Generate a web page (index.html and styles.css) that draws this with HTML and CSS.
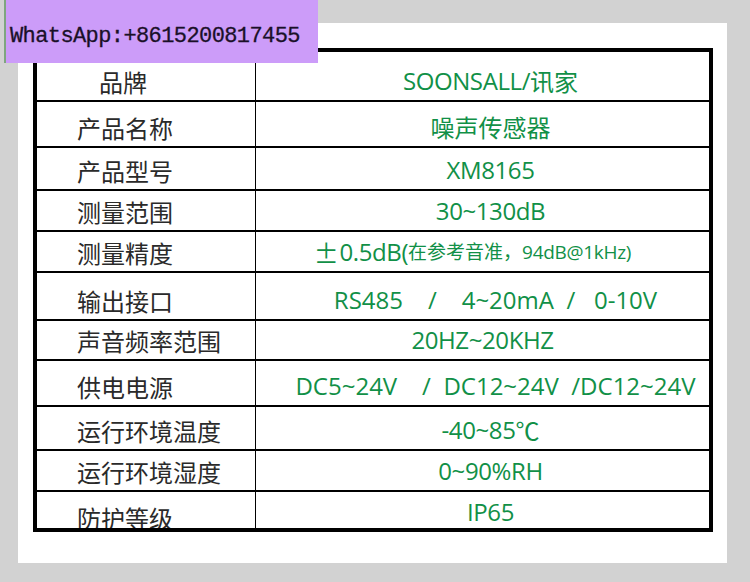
FILE: index.html
```html
<!DOCTYPE html>
<html lang="zh">
<head>
<meta charset="utf-8">
<title>噪声传感器 参数</title>
<link rel="stylesheet" href="styles.css">
</head>
<body>
<div class="stage">
  <div class="banner">WhatsApp:+8615200817455</div>
  <div class="panel">
    <div class="spec">
      <div class="lab brand">品牌</div><div class="val">SOONSALL/<span class="cjk">讯家</span></div>
      <div class="lab">产品名称</div><div class="val"><span class="cjk">噪声传感器</span></div>
      <div class="lab">产品型号</div><div class="val">XM8165</div>
      <div class="lab">测量范围</div><div class="val">30~130dB</div>
      <div class="lab">测量精度</div><div class="val acc"><span class="pm">±</span>0.5dB(<span class="small"><span class="cjk">在参考音准，</span>94dB@1kHz)</span></div>
      <div class="lab">输出接口</div><div class="val pre">RS485    /    4~20mA  /   0-10V</div>
      <div class="lab">声音频率范围</div><div class="val shiftl">20HZ~20KHZ</div>
      <div class="lab">供电电源</div><div class="val pre">DC5~24V    /  DC12~24V  /DC12~24V</div>
      <div class="lab">运行环境温度</div><div class="val">-40~85<span class="cjk">℃</span></div>
      <div class="lab">运行环境湿度</div><div class="val">0~90%RH</div>
      <div class="lab last"><span>防护等级</span></div><div class="val last"><span>IP65</span></div>
    </div>
  </div>
</div>
</body>
</html>
```
FILE: styles.css
```css
html, body {
  margin: 0;
  padding: 0;
  background: #d2d2d2;
}
.stage {
  position: relative;
  width: 750px;
  height: 582px;
  overflow: hidden;
  padding-top: 23px;
  padding-left: 18px;
  box-sizing: border-box;
}
.banner {
  position: absolute;
  left: 4px;
  top: 0;
  width: 314px;
  height: 63px;
  background: #cc9cf9;
  border-left: 2px solid #7fa67f;
  box-sizing: border-box;
  padding-left: 4px;
  padding-top: 24px;
  font-family: "Liberation Mono", monospace;
  font-size: 22px;
  letter-spacing: -0.6px;
  line-height: 26px;
  color: #1a1028;
  -webkit-text-stroke: 0.3px #1a1028;
  z-index: 2;
}
.panel {
  width: 709px;
  height: 540px;
  background: #ffffff;
  padding: 25px 0 0 15px;
  box-sizing: border-box;
}
.spec {
  width: 680px;
  border: 4px solid #000;
  box-sizing: border-box;
  display: grid;
  grid-template-columns: 219px 1fr;
  grid-template-rows: 50px 46px 43px 41px 41px 48px 40px 46px 44px 41px 36px;
}
.lab, .val {
  border-bottom: 2px solid #000;
  box-sizing: border-box;
  display: flex;
  align-items: flex-end;
  overflow: hidden;
  padding-bottom: 4px;
}
.lab {
  border-right: 1px solid #000;
  padding-left: 40px;
  font-family: "Noto Sans CJK SC", sans-serif;
  font-size: 24px;
  line-height: 28px;
  color: #2a2a2a;
}
.lab.brand {
  padding-left: 62px;
}
.val {
  justify-content: center;
  padding-left: 16px;
  font-family: "Open Sans", "Noto Sans CJK SC", sans-serif;
  font-weight: 500;
  font-size: 24px;
  letter-spacing: -0.4px;
  line-height: 28px;
  color: #119047;
  padding-bottom: 5px;
}
.cjk {
  font-family: "Noto Sans CJK SC", sans-serif;
  font-weight: 400;
  letter-spacing: 0;
}
.val.pre {
  white-space: pre;
  padding-left: 26px;
  letter-spacing: 0;
}
.val.shiftl {
  padding-left: 0;
}
.val.acc {
  padding-left: 0;
  margin-left: -20px;
}
.pm {
  font-family: "Noto Sans CJK SC", sans-serif;
  font-weight: 400;
  font-size: 25px;
  margin-right: 1px;
}
.small {
  font-size: 19px;
  letter-spacing: -0.3px;
}
.last {
  border-bottom: none;
}
.lab.last span {
  margin-bottom: -8px;
}
.val.last {
  padding-bottom: 2px;
}
```
